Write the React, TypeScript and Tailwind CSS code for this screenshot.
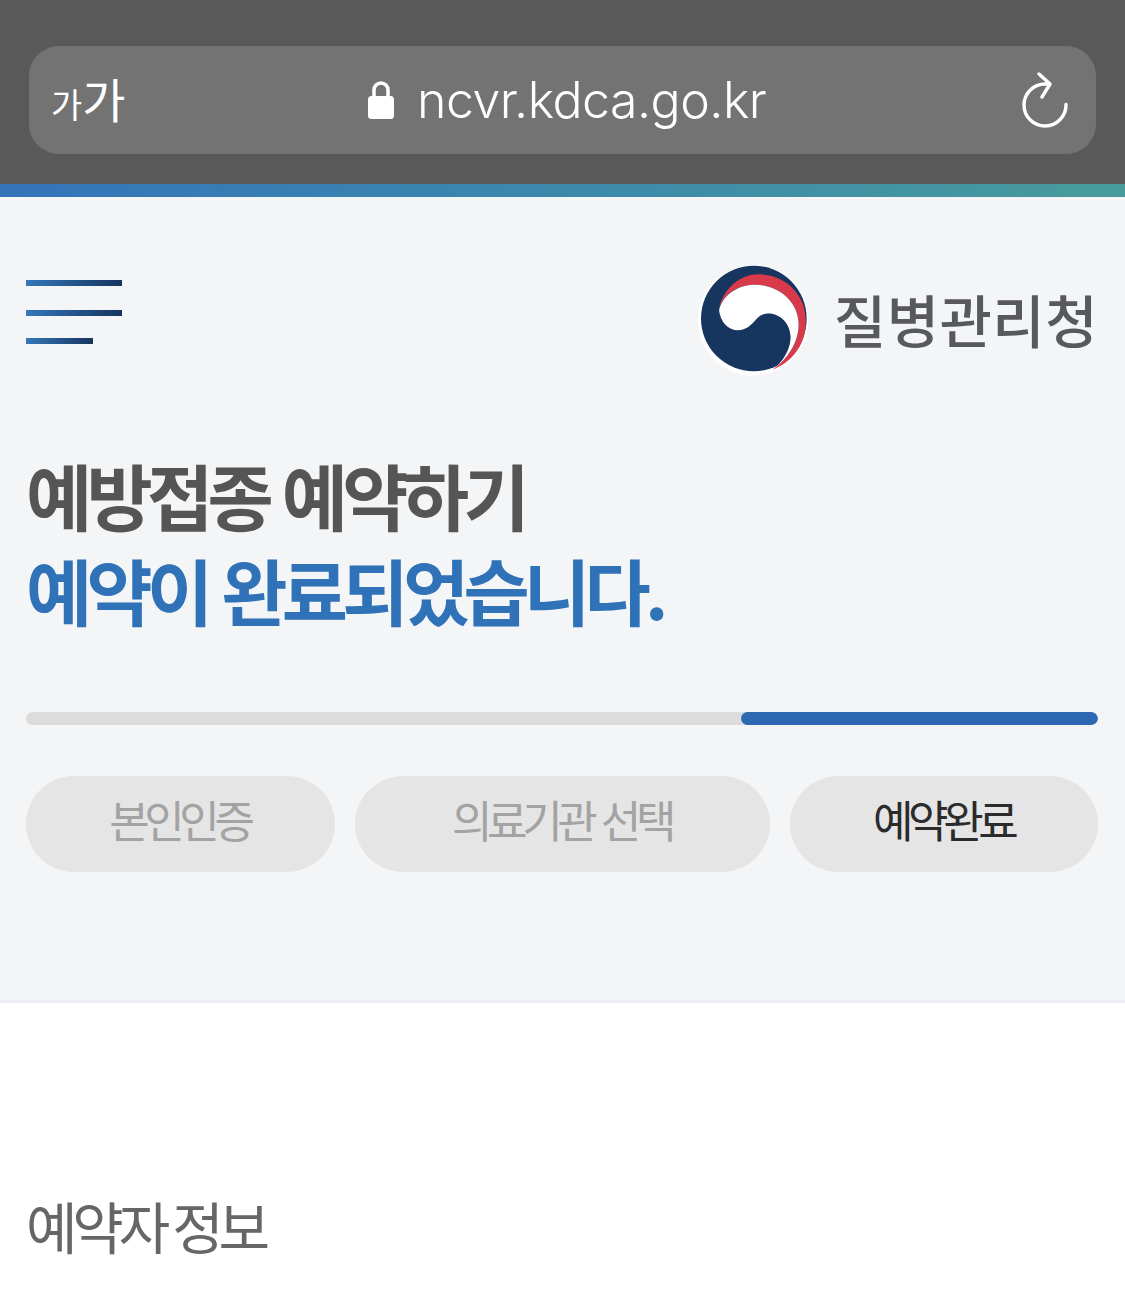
const krFont = "font-['Noto_Sans_CJK_KR','Noto_Sans',sans-serif]";

const steps = [
  { label: "본인인증", width: "w-[309px]", color: "text-[#a3a3a3]" },
  { label: "의료기관 선택", width: "w-[416px]", color: "text-[#a3a3a3]" },
  { label: "예약완료", width: "w-[308px]", color: "text-[#2b2b2b]" },
];

function BrowserBar() {
  return (
    <div className="h-[184px] bg-[#595959] pt-[46px] pl-[29px] pr-[29px]">
      <div className="relative flex h-[108px] items-center justify-between rounded-[30px] bg-[#737373] pl-[22px] pr-[28px] text-white">
        <div className={`mb-[6px] flex items-baseline leading-none ${krFont}`}>
          <span className="text-[34px]">가</span>
          <span className="text-[47px]">가</span>
        </div>
        <div className="absolute left-[339px] top-0 flex h-full items-center gap-[23px]">
          <svg width="26" height="40" viewBox="0 0 26 40" fill="none">
            <path d="M6 18V10a7 7 0 0 1 14 0v8" stroke="#fff" strokeWidth="3.5" />
            <rect x="0" y="16" width="26" height="23" rx="3.5" fill="#fff" />
          </svg>
          <span className="font-['Inter',sans-serif] text-[50px] font-light leading-none tracking-[-0.5px]">ncvr.kdca.go.kr</span>
        </div>
        <svg width="46" height="56" viewBox="0 0 46 56" fill="none" stroke="#fff" strokeWidth="3.4" strokeLinecap="round" strokeLinejoin="round">
          <path d="M44 32.5A21 21 0 1 1 23 12h4" />
          <path d="M17 2l11 10-8 13" />
        </svg>
      </div>
    </div>
  );
}

function Logo() {
  return (
    <svg width="112" height="112" viewBox="55 45 335 335">
      <circle cx="220" cy="211" r="165" fill="#fff" />
      <circle cx="222" cy="205" r="158" fill="#16355f" />
      <path d="M118 172C135 110 185 73 235 73C300 73 350 110 370 165C385 215 378 270 345 310C325 335 300 350 278 358C325 325 356 275 356 222C356 155 295 104 225 104C175 104 135 130 118 172Z" fill="#d93a4a" />
      <path d="M118 180C128 135 175 104 225 104C295 104 356 155 356 222C356 275 325 325 278 358C310 335 332 295 332 262C332 222 303 190 265 190C225 190 222 240 175 240C145 240 122 215 118 180Z" fill="#fff" />
    </svg>
  );
}

export default function App() {
  return (
    <div className={`h-[1304px] w-[1125px] overflow-hidden bg-white ${krFont}`}>
      <BrowserBar />
      <div className="h-[13px] bg-gradient-to-r from-[#3474ba] to-[#479c9b]" />

      <section className="h-[806px] border-b-[3px] border-[#ecedf4] bg-[#f4f5f7] pl-[26px] pr-[27px]">
        {/* Header */}
        <div className="flex items-start justify-between pt-[68px]">
          <div className="mt-[15px] flex w-[96px] flex-col">
            <div className="h-[6px] w-[96px] bg-gradient-to-r from-[#3478bb] to-[#16355f]" />
            <div className="mt-[24px] h-[6px] w-[96px] bg-gradient-to-r from-[#3478bb] to-[#16355f]" />
            <div className="mt-[22px] h-[6px] w-[67px] bg-gradient-to-r from-[#3478bb] to-[#16355f]" />
          </div>
          <div className="flex items-center gap-[24px]">
            <Logo />
            <span className="mb-[6px] text-[57px] font-medium leading-none tracking-[0.4px] text-[#58595b]">질병관리청</span>
          </div>
        </div>

        {/* Title */}
        <h1 className="mt-[69px] text-[72px] font-bold leading-[95px] tracking-[-5.7px] [word-spacing:3px] text-[#555555]">
          예방접종 예약하기
          <br />
          <span className="text-[#2f72b8]">예약이 완료되었습니다.</span>
        </h1>

        {/* Progress */}
        <div className="mt-[76px] flex h-[13px] overflow-hidden rounded-full bg-[#dcdcdc]">
          <div className="ml-auto h-full w-[357px] rounded-full bg-[#2d68b2]" />
        </div>

        {/* Steps */}
        <div className="mt-[51px] flex gap-[20px]">
          {steps.map((s) => (
            <div key={s.label} className={`flex h-[96px] items-center justify-center rounded-[48px] bg-[#e5e5e5] pb-[11px] pr-[2px] text-[44px] leading-none tracking-[-5.4px] [word-spacing:4px] ${s.width} ${s.color}`}>
              {s.label}
            </div>
          ))}
        </div>
      </section>

      <h2 className="mt-[194px] pl-[26px] text-[56px] font-normal leading-none tracking-[-5.2px] text-[#666666]">예약자 정보</h2>
    </div>
  );
}
